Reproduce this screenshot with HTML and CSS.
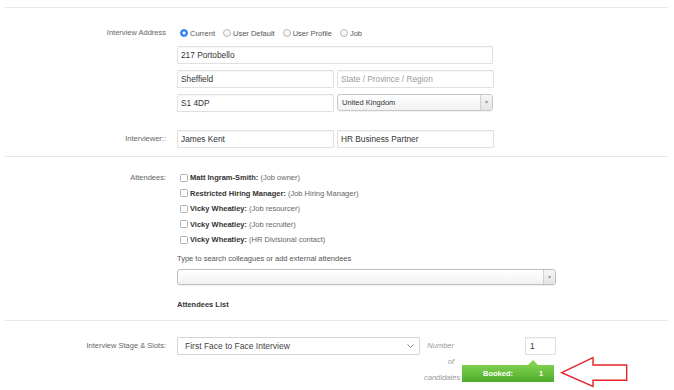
FILE: index.html
```html
<!DOCTYPE html>

<html>

<head>
    <meta charset="utf-8">

    <link rel="stylesheet" href="styles.css">
</head>

<body>
<form class="page" autocomplete="off">
    <div class="section">
        <div class="row">
            <div class="label label-radio">Interview Address</div>
            <div class="content">
                <div class="radios">
                    <span class="radio on"></span><span class="radio-text">Current</span>
                    <span class="radio"></span><span class="radio-text">User Default</span>
                    <span class="radio"></span><span class="radio-text">User Profile</span>
                    <span class="radio"></span><span class="radio-text">Job</span>
                </div>

                <input class="text wide" type="text" value="217 Portobello">

                <div class="pair">
                    <input class="text" type="text" value="Sheffield">
                    <input class="text" type="text" placeholder="State / Province / Region">
                </div>

                <div class="pair">
                    <input class="text" type="text" value="S1 4DP">
                    <div class="combo">
                        <span class="combo-value">United Kingdom</span>
                        <span class="combo-btn">&#9662;</span>
                    </div>
                </div>
            </div>
        </div>

        <div class="row interviewer">
            <div class="label">Interviewer::</div>
            <div class="content">
                <div class="pair">
                    <input class="text" type="text" value="James Kent">
                    <input class="text" type="text" value="HR Business Partner">
                </div>
            </div>
        </div>
    </div>

    <div class="section attendees">
        <div class="row">
            <div class="label label-line">Attendees:</div>
            <div class="content">
                <div class="check-row"><span class="check"></span><b>Matt Ingram-Smith:</b> (Job owner)</div>
                <div class="check-row"><span class="check"></span><b>Restricted Hiring Manager:</b> (Job Hiring Manager)</div>
                <div class="check-row"><span class="check"></span><b>Vicky Wheatley:</b> (Job resourcer)</div>
                <div class="check-row"><span class="check"></span><b>Vicky Wheatley:</b> (Job recruiter)</div>
                <div class="check-row"><span class="check"></span><b>Vicky Wheatley:</b> (HR Divisional contact)</div>

                <div class="hint">Type to search colleagues or add external attendees</div>

                <div class="combo search">
                    <span class="combo-value"></span>
                    <span class="combo-btn">&#9662;</span>
                </div>

                <div class="list-title">Attendees List</div>
            </div>
        </div>
    </div>

    <div class="section stage">
        <div class="row">
            <div class="label label-input">Interview Stage &amp; Slots:</div>
            <div class="content content-stage">
                <div class="stage-select">
                    <span>First Face to Face Interview</span>
                    <svg class="chevron" width="7" height="4" viewBox="0 0 7 4">
                        <path d="M0.5 0.5 L3.5 3.5 L6.5 0.5" fill="none" stroke="#777" stroke-width="0.9"/>
                    </svg>
                </div>

                <div class="number-label">Number of candidates</div>

                <div class="slots">
                    <input class="text number" type="text" value="1">
                    <div class="booked">
                        <span>Booked:</span>
                        <span class="booked-count">1</span>
                    </div>
                </div>

                <svg class="arrow" width="72" height="34" viewBox="0 0 72 34">
                    <path d="M3.7 17.7 L35 2.7 L35 10 L68.7 10 L68.7 25.3 L35 25.3 L35 31.5 Z"
                          fill="#fff" stroke="#e3242b" stroke-width="1.4" stroke-linejoin="miter"/>
                </svg>
            </div>
        </div>
    </div>
</form>
</body>
</html>
```

FILE: styles.css
```css
* {
    box-sizing: border-box;
}

html {
    overflow: hidden;
}

body {
    margin: 0;
    background-color: #fff;
    font-family: "Liberation Sans", Arial, sans-serif;
    font-size: 7.5px;
    color: #555;
}

.page {
    margin: 7px 6px 0 5px;
}

.section {
    border-top: 1px solid #e8e8e8;
    padding: 20px 0 8px 0;
}

.row {
    display: flex;
    align-items: flex-start;
}

.label {
    width: 161px;
    margin-right: 11px;
    text-align: right;
    color: #666;
    line-height: 18px;
}

.label-radio {
    line-height: 9px;
    margin-top: 0;
}

.label-line {
    line-height: 15.5px;
}

.content {
    display: flex;
    flex-direction: column;
}

.radios {
    display: flex;
    align-items: center;
    height: 10px;
    padding-left: 3px;
    margin-bottom: 8px;
}

.radio {
    width: 8px;
    height: 8px;
    border: 1px solid #b5b5b5;
    border-radius: 50%;
    background: linear-gradient(#fff, #f0f0f0);
    margin-right: 2px;
}

.radio.on {
    border-color: #2f7fe6;
    background: radial-gradient(circle, #fff 0, #fff 1.3px, #2f83f0 1.8px);
}

.radio-text {
    margin-right: 8px;
    color: #555;
}

input.text {
    font-family: "Liberation Sans", Arial, sans-serif;
    font-size: 8.3px;
    color: #333;
    height: 18px;
    width: 157px;
    padding: 0 3px;
    margin: 0;
    border: 1px solid #e0e0e0;
    border-radius: 1px;
    box-shadow: inset 0 1px 1px rgba(0, 0, 0, 0.04);
    background-color: #fff;
    outline: none;
}

input.text::placeholder {
    color: #9a9a9a;
}

input.wide {
    width: 316px;
    margin-bottom: 6px;
}

.pair {
    display: flex;
    gap: 3px;
    margin-bottom: 6px;
}

.pair:last-child {
    margin-bottom: 0;
}

.combo {
    display: flex;
    align-items: center;
    width: 156px;
    height: 17px;
    border: 1px solid #c8c8c8;
    border-radius: 3px;
    background: linear-gradient(#fff, #f2f2f2);
    box-shadow: 0 1px 1px rgba(0, 0, 0, 0.06);
}

.combo-value {
    flex: 1;
    padding-left: 4px;
    color: #333;
}

.combo-btn {
    width: 12px;
    height: 100%;
    border-left: 1px solid #d0d0d0;
    background: linear-gradient(#f6f6f6, #e4e4e4);
    border-radius: 0 2px 2px 0;
    color: #999;
    font-size: 6px;
    line-height: 15px;
    text-align: center;
}

.interviewer {
    margin-top: 18px;
}

.attendees {
    padding-top: 13px;
}

.check-row {
    display: flex;
    align-items: center;
    height: 15.5px;
    color: #666;
    white-space: pre;
}

.check-row b {
    color: #333;
}

.check {
    width: 8px;
    height: 8px;
    border: 1px solid #b0b0b0;
    border-radius: 1.5px;
    background-color: #fff;
    margin: 0 2px 0 3px;
}

.hint {
    line-height: 15.5px;
    margin-top: 3px;
    color: #555;
}

.combo.search {
    width: 379px;
    height: 16px;
    margin-top: 3px;
    border-color: #bdbdbd;
}

.list-title {
    font-weight: bold;
    color: #333;
    line-height: 15px;
    margin-top: 12px;
}

.stage {
    padding-top: 16px;
    padding-bottom: 0;
}

.content-stage {
    flex-direction: row;
    align-items: flex-start;
}

.stage-select {
    display: flex;
    align-items: center;
    justify-content: space-between;
    width: 243px;
    height: 18px;
    padding: 0 5px 0 7px;
    border: 1px solid #d4d4d4;
    border-radius: 1px;
    font-size: 8.5px;
    color: #444;
}

.number-label {
    width: 30px;
    margin: 1px 0 0 4px;
    text-align: right;
    font-style: italic;
    color: #999;
    line-height: 16.2px;
}

.slots {
    display: flex;
    flex-direction: column;
    align-items: flex-end;
    width: 94px;
    margin-left: 8px;
}

input.number {
    width: 31px;
    padding-left: 4px;
}

.booked {
    position: relative;
    display: flex;
    width: 92px;
    height: 17px;
    margin: 10px 2px 0 0;
    align-items: center;
    padding-left: 21px;
    background: linear-gradient(#7fd04f, #4eab2a);
    color: #fff;
    font-weight: bold;
}

.booked::before {
    content: "";
    position: absolute;
    top: -5px;
    left: 66px;
    border-left: 5px solid transparent;
    border-right: 5px solid transparent;
    border-bottom: 5px solid #80d150;
}

.booked-count {
    margin-left: 26px;
}

.arrow {
    margin: 18px 0 0 2px;
}
```
